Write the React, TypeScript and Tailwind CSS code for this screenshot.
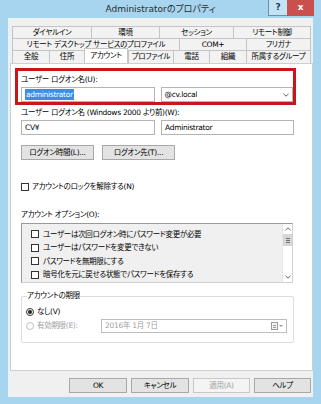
import React from 'react';

const font = "font-['DejaVu_Sans','Noto_Sans_CJK_JP',sans-serif] [font-feature-settings:'palt']";

type Tab = { label: string; w: string; active?: boolean };

const rows: Tab[][] = [
  [
    { label: 'ダイヤルイン', w: 'w-[79px]' },
    { label: '環境', w: 'w-[68px]' },
    { label: 'セッション', w: 'w-[74px]' },
    { label: 'リモート制御', w: 'w-[78px]' },
  ],
  [
    { label: 'リモート デスクトップ サービスのプロファイル', w: 'w-[167px]' },
    { label: 'COM+', w: 'w-[67px]' },
    { label: 'フリガナ', w: 'w-[65px]' },
  ],
  [
    { label: '全般', w: 'w-[37px]' },
    { label: '住所', w: 'w-[35px]' },
    { label: 'アカウント', w: 'w-[44px]', active: true },
    { label: 'プロファイル', w: 'w-[45px]' },
    { label: '電話', w: 'w-[36px]' },
    { label: '組織', w: 'w-[37px]' },
    { label: '所属するグループ', w: 'w-[65px]' },
  ],
];

const options = [
  'ユーザーは次回ログオン時にパスワード変更が必要',
  'ユーザーはパスワードを変更できない',
  'パスワードを無期限にする',
  '暗号化を元に戻せる状態でパスワードを保存する',
];

function Check() {
  return <span className="w-[8px] h-[8px] border border-[#333] bg-white shrink-0" />;
}

function Chevron({ up = false }: { up?: boolean }) {
  return (
    <svg width="6" height="4" viewBox="0 0 6 4" className={up ? 'rotate-180' : ''}>
      <path d="M0.5 0.8 L3 3.2 L5.5 0.8" fill="none" stroke="#606060" strokeWidth="1" />
    </svg>
  );
}

function Btn({ children, w, disabled = false }: { children: React.ReactNode; w: string; disabled?: boolean }) {
  return (
    <div
      className={`${w} h-[15px] flex items-center justify-center border leading-none ${
        disabled ? 'border-[#c8c8c8] bg-[#f4f4f4] text-[#a3a3a3]' : 'border-[#a8a8a8] bg-[#e3e3e3] text-[#000]'
      }`}
    >
      {children}
    </div>
  );
}

function Field({ w, children }: { w: string; children?: React.ReactNode }) {
  return (
    <div className={`${w} h-[15px] border border-[#b4b4b4] bg-white flex items-center px-[3px]`}>
      {children}
    </div>
  );
}

export default function App() {
  return (
    <div className={`w-[321px] h-[404px] bg-[#a7d5ef] flex flex-col ${font} text-[7.5px] tracking-[-0.3px] text-[#000]`}>
      {/* title bar */}
      <div className="h-[18px] flex">
        <div className="w-[53px]" />
        <div className="flex-1 flex items-center justify-center text-[9px] tracking-normal text-[#2b2b2b] pt-[1px]">
          Administratorのプロパティ
        </div>
        <div className="w-[19px] h-[16px] border-l border-b border-[#6a8fa8] bg-[#c3e2f4] flex items-center justify-center text-[9px] font-bold text-[#1d3b52]">
          ?
        </div>
        <div className="w-[27px] h-[16px] bg-[#c9504d] flex items-center justify-center text-[9px] font-bold text-white">
          x
        </div>
        <div className="w-[7px]" />
      </div>

      {/* client */}
      <div className="mx-[8px] h-[379px] bg-[#f0f0f0] border-l border-t border-[#e6f3fa] flex flex-col px-[1px]">
        {/* tabs */}
        <div className="mt-[7px] pl-[2px] flex flex-col">
          {rows.map((row, ri) => (
            <div key={ri} className="flex h-[12px]">
              {row.map((t, i) =>
                t.active ? (
                  <div
                    key={i}
                    className={`${t.w} relative z-10 -mt-[2px] h-[15px] bg-white border border-b-0 border-[#c4c4c4] flex items-center justify-center leading-none`}
                  >
                    {t.label}
                  </div>
                ) : (
                  <div
                    key={i}
                    className={`${t.w} h-[13px] bg-[#f2f2f2] border border-r-0 last:border-r border-b-0 border-[#c4c4c4] flex items-center justify-center leading-none whitespace-nowrap`}
                  >
                    {t.label}
                  </div>
                )
              )}
            </div>
          ))}
        </div>

        {/* panel */}
        <div className="mt-[1px] h-[308px] w-[303px] bg-white border border-[#cfcfcf] flex flex-col">
          {/* red box */}
          <div className="ml-[4px] mt-[4px] w-[281px] h-[37px] border-[3px] border-[#c8161d] flex flex-col pl-[3px]">
            <div className="mt-[3px] h-[12px] flex items-center">ユーザー ログオン名(U):</div>
            <div className="mt-[1px] flex gap-[6px]">
              <Field w="w-[134px]">
                <span className="bg-[#3a8ee6] text-white px-[1px] leading-[11px]">administrator</span>
              </Field>
              <div className="w-[133px] h-[15px] border border-[#b4b4b4] bg-white flex items-center justify-between px-[3px]">
                <span>@cv.local</span>
                <Chevron />
              </div>
            </div>
          </div>

          <div className="pl-[10px] flex flex-col">
            <div className="mt-[2px] h-[12px] flex items-center">ユーザー ログオン名 (Windows 2000 より前)(W):</div>
            <div className="mt-[1px] flex gap-[6px]">
              <Field w="w-[134px]">CV¥</Field>
              <Field w="w-[133px]">Administrator</Field>
            </div>

            <div className="mt-[10px] flex gap-[8px]">
              <Btn w="w-[73px]">ログオン時間(L)...</Btn>
              <Btn w="w-[73px]">ログオン先(T)...</Btn>
            </div>

            <div className="mt-[21px] h-[12px] flex items-center gap-[3px]">
              <Check />
              <span>アカウントのロックを解除する(N)</span>
            </div>

            <div className="mt-[16px] h-[12px] flex items-center">アカウント オプション(O):</div>

            {/* list box */}
            <div className="mt-[2px] w-[272px] h-[60px] border border-[#9a9a9a] border-r-[#d0d0d0] border-b-[#d0d0d0] bg-[#f0f0f0] flex">
              <div className="flex-1 flex flex-col pt-[4px] pl-[9px] gap-[1px]">
                {options.map((t) => (
                  <div key={t} className="h-[12.5px] flex items-center gap-[4px] whitespace-nowrap">
                    <Check />
                    <span>{t}</span>
                  </div>
                ))}
              </div>
              <div className="w-[10px] bg-white border-l border-[#e8e8e8] flex flex-col items-center">
                <div className="h-[10px] flex items-center justify-center">
                  <Chevron up />
                </div>
                <div className="w-[9px] h-[12px] bg-[#d6d6d6] flex flex-col items-center justify-center gap-[1px]">
                  <span className="w-[4px] h-px bg-[#707070]" />
                  <span className="w-[4px] h-px bg-[#707070]" />
                  <span className="w-[4px] h-px bg-[#707070]" />
                </div>
                <div className="flex-1" />
                <div className="h-[10px] flex items-center justify-center">
                  <Chevron />
                </div>
              </div>
            </div>

            {/* group box */}
            <fieldset className="mt-[7px] w-[273px] h-[53px] border border-[#dcdcdc] rounded-[2px] pl-[4px]">
              <legend className="ml-[1px] px-0 leading-[12px]">アカウントの期限</legend>
              <div className="mt-[4px] h-[12px] flex items-center gap-[3px]">
                <span className="w-[8px] h-[8px] rounded-full border border-[#333] bg-white flex items-center justify-center">
                  <span className="w-[4px] h-[4px] rounded-full bg-[#222]" />
                </span>
                <span>なし(V)</span>
              </div>
              <div className="mt-[1px] h-[14px] flex items-center text-[#a0a0a0]">
                <span className="w-[8px] h-[8px] rounded-full border border-[#c0c0c0] bg-white" />
                <span className="ml-[3px] w-[64px]">有効期限(E):</span>
                <div className="w-[186px] h-[14px] border border-[#bdbdbd] bg-white flex items-center justify-between px-[3px]">
                  <span>2016年 1月 7日</span>
                  <span className="flex items-center gap-[1px]">
                    <span className="w-[7px] h-[8px] border border-[#9a9a9a] bg-[#f4f4f4] flex flex-col justify-center gap-[1px] px-[1px]">
                      <span className="h-px bg-[#9a9a9a]" />
                      <span className="h-px bg-[#9a9a9a]" />
                    </span>
                    <span className="w-0 h-0 border-l-[2px] border-r-[2px] border-t-[2px] border-l-transparent border-r-transparent border-t-[#9a9a9a]" />
                  </span>
                </div>
              </div>
            </fieldset>
          </div>
        </div>

        {/* dialog buttons */}
        <div className="mt-[7px] flex justify-end gap-[4px] pr-[1px]">
          <Btn w="w-[58px]">OK</Btn>
          <Btn w="w-[58px]">キャンセル</Btn>
          <Btn w="w-[57px]" disabled>
            適用(A)
          </Btn>
          <Btn w="w-[57px]">ヘルプ</Btn>
        </div>
      </div>
    </div>
  );
}
